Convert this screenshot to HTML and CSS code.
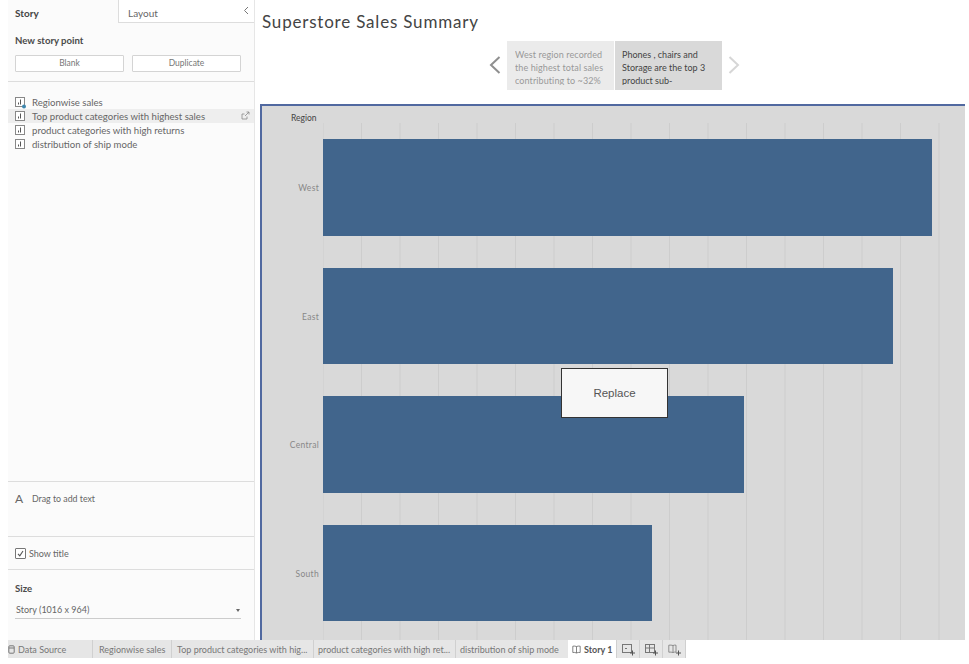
FILE: index.html
```html
<!DOCTYPE html>
<html lang="en">
<head>
<meta charset="utf-8">
<title>Superstore Sales Summary</title>
<link rel="stylesheet" href="styles.css">
</head>
<body>
<div class="workspace">
  <aside class="sidebar">
    <div class="tabs">
      <div class="tab tab-active">Story</div>
      <div class="tab tab-other">Layout<span class="collapse"><svg width="6" height="9" viewBox="0 0 6 9"><path d="M5 1 1.5 4.5 5 8" fill="none" stroke="#777" stroke-width="1"/></svg></span></div>
    </div>
    <section class="new-point">
      <h3 class="heading">New story point</h3>
      <div class="buttons">
        <div class="btn">Blank</div>
        <div class="btn">Duplicate</div>
      </div>
    </section>
    <ul class="sheets">
      <li class="sheet"><svg class="sheet-icon" width="11" height="11" viewBox="0 0 11 11"><rect x=".5" y=".5" width="9" height="9" fill="#fff" stroke="#888"/><path d="M3.5 7.500V5.500M5.500 7.500V2.500" stroke="#555" stroke-width="1"/><circle cx="9" cy="9.500" r="2" fill="#3d86ad"/></svg>Regionwise sales</li>
      <li class="sheet sheet-hover"><svg class="sheet-icon" width="11" height="11" viewBox="0 0 11 11"><rect x=".5" y=".5" width="9" height="9" fill="#fff" stroke="#888"/><path d="M3.5 7.500V5.500M5.500 7.500V2.500" stroke="#555" stroke-width="1"/></svg>Top product categories with highest sales<svg class="goto" width="9" height="9" viewBox="0 0 9 9"><path d="M6 5.500V8H1V3h2.500M4 5l4-4M5.500 1H8v2.500" fill="none" stroke="#888" stroke-width=".8"/></svg></li>
      <li class="sheet"><svg class="sheet-icon" width="11" height="11" viewBox="0 0 11 11"><rect x=".5" y=".5" width="9" height="9" fill="#fff" stroke="#888"/><path d="M3.5 7.500V5.500M5.500 7.500V2.500" stroke="#555" stroke-width="1"/></svg>product categories with high returns</li>
      <li class="sheet"><svg class="sheet-icon" width="11" height="11" viewBox="0 0 11 11"><rect x=".5" y=".5" width="9" height="9" fill="#fff" stroke="#888"/><path d="M3.5 7.500V5.500M5.500 7.500V2.500" stroke="#555" stroke-width="1"/></svg>distribution of ship mode</li>
    </ul>
    <section class="drag-text"><span class="big-a">A</span>Drag to add text</section>
    <section class="show-title"><span class="check"><svg width="11" height="11" viewBox="0 0 11 11"><path d="M3 5.800 4.800 7.800 8 3" fill="none" stroke="#555" stroke-width="1.100"/></svg></span>Show title</section>
    <section class="size">
      <h3 class="heading">Size</h3>
      <div class="select">Story (1016 x 964)<span class="caret"></span></div>
    </section>
  </aside>
  <main class="story">
    <h1 class="title">Superstore Sales Summary</h1>
    <nav class="navigator">
      <svg class="arrow" width="14" height="20" viewBox="0 0 14 20"><path d="M11.500 2 3 10l8.500 8" fill="none" stroke="#8f8f8f" stroke-width="2"/></svg>
      <div class="point point-past"><div class="point-text">West region recorded the highest total sales contributing to ~32%</div></div>
      <div class="point point-current"><div class="point-text">Phones , chairs and Storage are the top 3 product sub-categories</div></div>
      <svg class="arrow" width="14" height="20" viewBox="0 0 14 20"><path d="M2.500 2 11 10l-8.500 8" fill="none" stroke="#d6d6d6" stroke-width="2"/></svg>
    </nav>
    <div class="canvas">
      <div class="axis-title">Region</div>
      <div class="rows">
        <div class="row"><div class="label">West</div><div class="track"><div class="bar" style="width:609px"></div></div></div>
        <div class="row"><div class="label">East</div><div class="track"><div class="bar" style="width:570px"></div></div></div>
        <div class="row"><div class="label">Central</div><div class="track"><div class="bar" style="width:421px"></div></div></div>
        <div class="row"><div class="label">South</div><div class="track"><div class="bar" style="width:329px"></div></div></div>
      </div>
      <div class="replace">Replace</div>
    </div>
  </main>
</div>
<footer class="tabbar">
  <div class="bar-tab tab-source"><svg width="7" height="9" viewBox="0 0 7 9"><rect x=".8" y=".8" width="5.400" height="7.400" rx="1" fill="none" stroke="#777"/><path d="M1 3h5" stroke="#777"/></svg>Data Source</div>
  <div class="bar-tab tab-w1">Regionwise sales</div>
  <div class="bar-tab tab-w2">Top product categories with hig...</div>
  <div class="bar-tab tab-w3">product categories with high ret...</div>
  <div class="bar-tab tab-w4">distribution of ship mode</div>
  <div class="bar-tab tab-story"><svg width="9" height="9" viewBox="0 0 9 9"><path d="M4.500 1.500v6.500M4.500 1.500C3.500 1 2 1 .8 1.200v6.300C2 7.300 3.500 7.400 4.500 8c1-.6 2.500-.7 3.700-.5V1.200C7 1 5.500 1 4.500 1.500Z" fill="none" stroke="#666" stroke-width=".8"/></svg>Story 1</div>
  <div class="bar-tab tab-icon"><svg width="14" height="12" viewBox="0 0 14 12"><rect x=".5" y=".5" width="9" height="8" fill="none" stroke="#777"/><path d="M3 4.500h2" stroke="#777"/><path d="M10.500 6.500v5M8 9h5" stroke="#555"/></svg></div>
  <div class="bar-tab tab-icon"><svg width="14" height="12" viewBox="0 0 14 12"><rect x=".5" y=".5" width="9" height="8" fill="none" stroke="#777"/><path d="M.5 4h9M4.500 .5v8" stroke="#777"/><path d="M10.500 6.500v5M8 9h5" stroke="#555"/></svg></div>
  <div class="bar-tab tab-icon"><svg width="14" height="12" viewBox="0 0 14 12"><path d="M5 1.500v7M5 1.500C4 1 2 1 .8 1.200v7C2 8 4 8 5 8.500c1-.5 2-.5 3-.3V1.200C7 1 6 1 5 1.500Z" fill="none" stroke="#777" stroke-width=".8"/><path d="M10.500 6.500v5M8 9h5" stroke="#555"/></svg></div>
</footer>
</body>
</html>
```
FILE: styles.css
```css
* { box-sizing: border-box; }
html, body { margin: 0; padding: 0; height: 100%; background: #fff; overflow: hidden; }
body { font-family: "Lato", "Open Sans", sans-serif; color: #555; font-size: 9px; }
.workspace { display: flex; height: 640px; padding-left: 8px; }
.sidebar { width: 247px; flex: none; display: flex; flex-direction: column; background: #fbfbfb; border-right: 1px solid #e6e6e6; margin-right: 5px; }
.tabs { display: flex; height: 23px; }
.tab { font-size: 10px; line-height: 26px; }
.tab-active { width: 110px; padding-left: 7px; font-weight: 700; color: #444; }
.tab-other { flex: 1; position: relative; padding-left: 9px; color: #666; background: #fff; border-left: 1px solid #ddd; border-bottom: 1px solid #ddd; }
.collapse { position: absolute; right: 5px; top: 0; line-height: 22px; }
.new-point { height: 59px; padding: 12px 13px 0 7px; border-bottom: 1px solid #ddd; }
.heading { margin: 0; font-size: 9.600px; line-height: 11px; font-weight: 700; color: #4a4a4a; }
.buttons { display: flex; gap: 8px; margin-top: 9px; }
.btn { flex: 1; height: 17px; line-height: 15px; text-align: center; color: #777; background: #fff; border: 1px solid #d4d4d4; border-radius: 1px; font-size: 8.500px; }
.sheets { list-style: none; margin: 13px 0 0; padding: 0; flex: 1; }
.sheet { height: 14.200px; display: flex; align-items: center; padding-left: 7px; font-size: 9.600px; color: #666; position: relative; }
.sheet-hover { background: #eee; }
.sheet-icon { margin-right: 6px; flex: none; overflow: visible; }
.goto { position: absolute; right: 4px; top: 2px; }
.drag-text { height: 55px; border-top: 1px solid #ddd; padding: 10px 0 0 7px; display: flex; align-items: flex-start; font-size: 8.800px; color: #666; line-height: 14px; }
.big-a { font-size: 12px; width: 17px; color: #666; }
.show-title { height: 33px; border-top: 1px solid #ddd; display: flex; align-items: center; padding-left: 7px; font-size: 9px; color: #666; }
.check { width: 11px; height: 11px; border: 1px solid #777; border-radius: 1px; background: #fff; margin-right: 3px; display: block; line-height: 0; }
.check svg { margin: -1px; }
.size { flex: none; height: 71px; border-top: 1px solid #ddd; padding: 13px 13px 0 7px; }
.select { position: relative; margin-top: 10px; height: 15px; font-size: 9px; line-height: 12px; color: #666; border-bottom: 1px solid #ccc; padding-left: 1px; }
.caret { position: absolute; right: 1px; top: 5px; width: 0; height: 0; border: 2.500px solid transparent; border-top: 3px solid #666; }
.story { flex: 1; min-width: 0; display: flex; flex-direction: column; }
.title { margin: 11px 0 0 2px; font-size: 17px; font-weight: 400; line-height: 21px; color: #444; letter-spacing: .8px; white-space: nowrap; }
.navigator { height: 72px; padding-top: 9px; display: flex; align-items: flex-start; justify-content: flex-start; padding-left: 228px; }
.arrow { flex: none; margin-top: 14px; }
.point { width: 107px; height: 49px; font-size: 9px; line-height: 13px; }
.point-text { height: 37px; overflow: hidden; }
.point-past { background: #ebebeb; color: #999; margin: 0 1px 0 5px; padding: 7px 3px 0 8px; letter-spacing: .1px; }
.point-current { background: #d9d9d9; color: #444; margin-right: 5px; padding: 7px 10px 0 7px; }
.canvas { position: relative; width: 705px; flex: 1; background: #d9d9d9; border-top: 2px solid #5169a0; border-left: 2px solid #5169a0; }
.axis-title { height: 17px; line-height: 25px; font-size: 8.500px; font-weight: 400; color: #444; padding-left: 29px; }
.rows { display: flex; flex-direction: column; margin-left: 61px; background-image: linear-gradient(to right, #cdcdcd 1px, transparent 1px); background-size: 38.500px 100%; background-position: 38px 0; height: 517px; }
.row { height: 128.500px; padding: 16px 0 0; position: relative; flex: none; }
.track { height: 96.500px; }
.bar { height: 100%; background: #41658c; }
.label { position: absolute; right: 100%; top: 59px; margin-right: 4px; font-size: 8.500px; line-height: 12px; letter-spacing: .3px; color: #888; white-space: nowrap; }
.replace { position: absolute; left: 299px; top: 262px; width: 107px; height: 50px; background: #f7f7f7; border: 1px solid #333; color: #555; font-family: "Liberation Sans", sans-serif; font-size: 11.500px; display: flex; align-items: center; justify-content: center; }
.tabbar { display: flex; margin-left: 8px; height: 18px; width: 678px; background: #e6e6e6; font-size: 9px; color: #777; }
.bar-tab { display: flex; align-items: center; height: 100%; padding-top: 1px; white-space: nowrap; border-right: 1px solid #d0d0d0; padding-left: 4px; overflow: hidden; }
.tab-source { width: 85px; padding-left: 0; gap: 3px; }
.tab-w1 { width: 79px; padding-left: 6px; }
.tab-w2 { width: 142px; padding-left: 5px; }
.tab-w3 { width: 142px; }
.tab-w4 { width: 112px; border-right: none; }
.tab-story { width: 49px; background: #fff; color: #555; font-weight: 700; gap: 3px; padding-left: 4px; }
.tab-icon { width: 23px; padding-left: 5px; }
```
